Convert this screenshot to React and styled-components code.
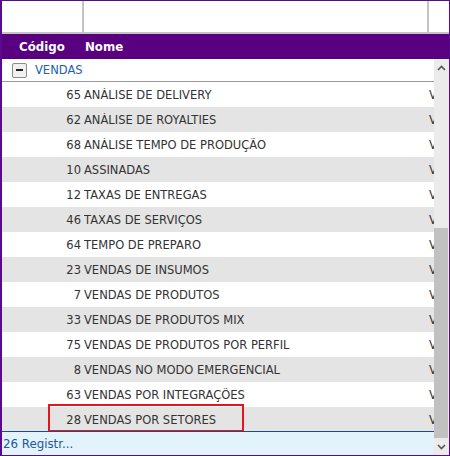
import React from "react";
import styled, { createGlobalStyle } from "styled-components";

const Global = createGlobalStyle`
  html, body { margin: 0; padding: 0; background: #fff; }
  * { box-sizing: border-box; }
`;

const Frame = styled.div`
  width: 450px;
  height: 456px;
  border: 1px solid #5a0a8c;
  border-left-width: 2px;
  display: flex;
  flex-direction: column;
  overflow: hidden;
  font-family: "DejaVu Sans", "Liberation Sans", sans-serif;
  font-size: 11.5px;
  color: #333;
`;

const FilterRow = styled.div`
  height: 33px;
  flex: none;
  display: flex;
  border-bottom: 2px solid #c4c4c4;
  background: #fff;
`;

const FilterCell = styled.div`
  width: ${(p) => (p.$w ? `${p.$w}px` : "auto")};
  flex: ${(p) => (p.$w ? "none" : "1")};
  border-right: ${(p) => (p.$last ? "none" : "2px solid #c4c4c4")};
`;

const Header = styled.div`
  height: 25px;
  flex: none;
  display: flex;
  align-items: center;
  background: #58007f;
  color: #fff;
  font-weight: bold;
  font-size: 11.8px;
`;

const HeadCell = styled.div`
  width: ${(p) => p.$w}px;
  padding-left: ${(p) => p.$pl}px;
`;

const Body = styled.div`
  flex: 1;
  display: flex;
  min-height: 0;
`;

const Main = styled.div`
  flex: 1;
  display: flex;
  flex-direction: column;
  min-width: 0;
`;

const GroupRow = styled.div`
  height: 23px;
  flex: none;
  display: flex;
  align-items: center;
  gap: 8px;
  padding-left: 10px;
  border-bottom: 1px solid #9a9a9a;
  color: #2462a8;
  font-size: 11.5px;
`;

const Toggle = styled.div`
  width: 15px;
  height: 15px;
  border: 1px solid #8c8c8c;
  border-radius: 2px;
  background: #f1f1f1;
  display: flex;
  align-items: center;
  justify-content: center;
  &::after {
    content: "";
    width: 7px;
    height: 2px;
    background: #222;
  }
`;

const Rows = styled.div`
  flex: 1;
  overflow: hidden;
  min-height: 0;
`;

const Row = styled.div`
  position: relative;
  height: 25px;
  display: flex;
  align-items: center;
  background: ${(p) => (p.$alt ? "#e4e4e4" : "#fff")};
  white-space: nowrap;
`;

const CodeCell = styled.div`
  width: 82px;
  flex: none;
  text-align: right;
  padding-right: 3px;
`;

const NameCell = styled.div`
  width: 343px;
  flex: none;
  overflow: hidden;
`;

const ExtraCell = styled.div`
  flex: 1;
  overflow: hidden;
  padding-left: 2px;
`;

const Highlight = styled.div`
  position: absolute;
  left: 46px;
  top: -3px;
  width: 196px;
  height: 28px;
  border: 2.5px solid #e8141c;
  pointer-events: none;
`;

const Footer = styled.div`
  height: 24px;
  flex: none;
  display: flex;
  align-items: center;
  padding-left: 1px;
  background: #e3f3fc;
  border-top: 1px solid #1d4f7e;
  color: #24579a;
  font-size: 11.8px;
`;

const Scrollbar = styled.div`
  width: 15px;
  flex: none;
  display: flex;
  flex-direction: column;
  background: #ebebeb;
`;

const ArrowBtn = styled.div`
  height: 17px;
  flex: none;
  display: flex;
  align-items: center;
  justify-content: center;
`;

const Track = styled.div`
  flex: 1;
  display: flex;
  flex-direction: column;
  justify-content: flex-end;
`;

const Thumb = styled.div`
  height: 210px;
  width: 14px;
  background: #c1c1c1;
`;

const Chevron = ({ up }) => (
  <svg width="9" height="6" viewBox="0 0 9 6">
    <path
      d={up ? "M1 5 L4.5 1.5 L8 5" : "M1 1 L4.5 4.5 L8 1"}
      fill="none"
      stroke="#555"
      strokeWidth="1.6"
    />
  </svg>
);

const data = [
  [65, "ANÁLISE DE DELIVERY"],
  [62, "ANÁLISE DE ROYALTIES"],
  [68, "ANÁLISE TEMPO DE PRODUÇÃO"],
  [10, "ASSINADAS"],
  [12, "TAXAS DE ENTREGAS"],
  [46, "TAXAS DE SERVIÇOS"],
  [64, "TEMPO DE PREPARO"],
  [23, "VENDAS DE INSUMOS"],
  [7, "VENDAS DE PRODUTOS"],
  [33, "VENDAS DE PRODUTOS MIX"],
  [75, "VENDAS DE PRODUTOS POR PERFIL"],
  [8, "VENDAS NO MODO EMERGENCIAL"],
  [63, "VENDAS POR INTEGRAÇÕES"],
  [28, "VENDAS POR SETORES"],
];

export default function App() {
  return (
    <>
      <Global />
      <Frame>
        <FilterRow>
          <FilterCell $w={82} />
          <FilterCell $w={345} />
          <FilterCell $last />
        </FilterRow>
        <Header>
          <HeadCell $w={83} $pl={17}>Código</HeadCell>
          <HeadCell $w={100} $pl={0}>Nome</HeadCell>
        </Header>
        <Body>
          <Main>
            <GroupRow>
              <Toggle />
              <span>VENDAS</span>
            </GroupRow>
            <Rows>
              {data.map(([code, name], i) => (
                <Row key={code} $alt={i % 2 === 1}>
                  <CodeCell>{code}</CodeCell>
                  <NameCell>{name}</NameCell>
                  <ExtraCell>VENDAS</ExtraCell>
                  {code === 28 && <Highlight />}
                </Row>
              ))}
            </Rows>
            <Footer>26 Registr...</Footer>
          </Main>
          <Scrollbar>
            <ArrowBtn>
              <Chevron up />
            </ArrowBtn>
            <Track>
              <Thumb />
            </Track>
            <ArrowBtn>
              <Chevron />
            </ArrowBtn>
          </Scrollbar>
        </Body>
      </Frame>
    </>
  );
}
